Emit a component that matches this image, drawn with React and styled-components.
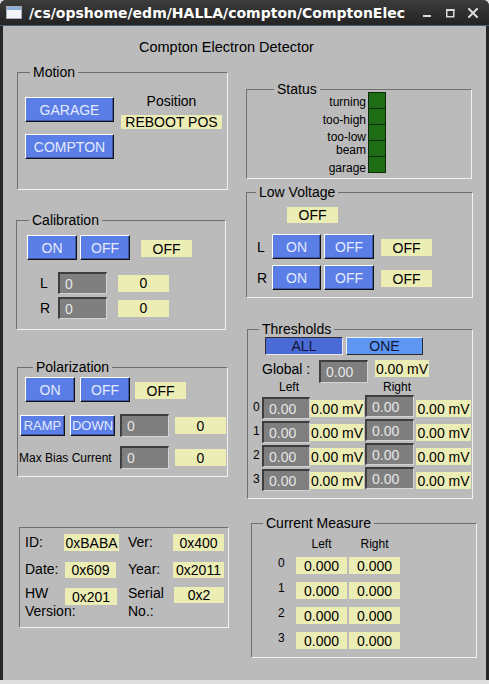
import React from 'react';
import styled, { createGlobalStyle } from 'styled-components';

const FONT = `"Liberation Sans", Arial, Helvetica, sans-serif`;

const GlobalStyle = createGlobalStyle`
  html, body { margin: 0; padding: 0; background: #dedede; }
  body { font-family: ${FONT}; color: #000; }
  * { box-sizing: border-box; }
`;

const Window = styled.div`
  width: 489px;
  height: 680px;
  display: flex;
  flex-direction: column;
  background: #262626;
  border-radius: 6px 6px 0 0;
  overflow: hidden;
`;

const TitleBar = styled.div`
  flex: 0 0 26px;
  height: 26px;
  display: flex;
  align-items: center;
  padding: 0 11px 0 6px;
  background: linear-gradient(#3c3c3c, #232323);
  border-bottom: 1px solid #4a5b70;
  & > svg {
    flex: none;
  }
`;

const TitleText = styled.div`
  flex: 0 1 auto;
  min-width: 0;
  overflow: hidden;
  margin-left: 7px;
  color: #fff;
  font: bold 14px "DejaVu Sans", sans-serif;
  white-space: nowrap;
`;

const Controls = styled.div`
  flex: none;
  margin-left: auto;
  padding-left: 6px;
  display: flex;
  gap: 13px;
  align-items: center;
`;

const Content = styled.div`
  flex: 1;
  margin: 0 3px;
  background: #bbbbbb;
  display: flex;
  flex-direction: column;
`;

const Heading = styled.div`
  margin: 13px 0 0 136px;
  font-size: 14.5px;
  line-height: 16px;
`;

const Columns = styled.div`
  display: grid;
  grid-template-columns: 237px 1fr;
  align-items: start;
`;

const Col = styled.div`
  display: flex;
  flex-direction: column;
  align-items: flex-start;
`;

const Box = styled.div`
  position: relative;
  flex: none;
  width: ${(p) => p.$w}px;
  height: ${(p) => p.$h}px;
  margin: ${(p) => p.$mt || 0}px 0 0 ${(p) => p.$ml || 0}px;
  padding: ${(p) => p.$pt || 0}px 0 0 ${(p) => p.$pl || 0}px;
  border: 1px solid;
  border-color: #707070 #f2f2f2 #f2f2f2 #707070;
`;

const Legend = styled.span`
  position: absolute;
  top: -9px;
  left: ${(p) => p.$x}px;
  padding: 0 3px;
  background: #bbbbbb;
  font-size: 14px;
  line-height: 16px;
  white-space: nowrap;
`;

const Row = styled.div`
  display: flex;
  align-items: ${(p) => p.$align || 'center'};
  gap: ${(p) => p.$gap || 0}px;
  margin: ${(p) => p.$mt || 0}px 0 0 ${(p) => p.$ml || 0}px;
  ${(p) => (p.$h ? `height: ${p.$h}px;` : '')}
`;

const Stack = styled.div`
  display: flex;
  flex-direction: column;
  align-items: ${(p) => p.$align || 'flex-start'};
  gap: ${(p) => p.$gap || 0}px;
  margin-top: ${(p) => p.$mt || 0}px;
  ${(p) => (p.$w ? `width: ${p.$w}px;` : '')}
`;

const Label = styled.div`
  flex: none;
  ${(p) => (p.$w ? `width: ${p.$w}px;` : '')}
  padding-left: ${(p) => p.$pl || 0}px;
  margin: ${(p) => p.$mt || 0}px 0 0 ${(p) => p.$ml || 0}px;
  font-size: ${(p) => p.$fs || 14}px;
  line-height: ${(p) => p.$lh || 16}px;
  text-align: ${(p) => p.$align || 'left'};
  white-space: nowrap;
`;

const Btn = styled.button`
  flex: none;
  width: ${(p) => p.$w}px;
  height: ${(p) => p.$h}px;
  margin: 0 0 0 ${(p) => p.$ml || 0}px;
  padding: 0;
  display: flex;
  align-items: center;
  justify-content: center;
  overflow: hidden;
  background: #5a7ee6;
  border: 1px solid;
  border-color: #ffffff #111111 #111111 #ffffff;
  box-shadow: inset -1px -1px 0 #3e56a8;
  color: #e4eaff;
  font-family: ${FONT};
  font-size: ${(p) => p.$fs || 14}px;
  line-height: 1;
  white-space: nowrap;
`;

const Choice = styled.div`
  flex: none;
  width: ${(p) => p.$w}px;
  height: ${(p) => p.$h}px;
  margin-left: ${(p) => p.$ml || 0}px;
  display: flex;
  align-items: center;
  justify-content: center;
  font-size: 14px;
  color: #111530;
  background: ${(p) => (p.$active ? '#4a6bd6' : '#5d96f3')};
  border: 1px solid;
  border-color: ${(p) =>
    p.$active ? '#2c2c2c #e8e8e8 #e8e8e8 #2c2c2c' : '#f2f2f2 #2c2c2c #2c2c2c #f2f2f2'};
`;

const Readout = styled.div`
  flex: none;
  width: ${(p) => p.$w}px;
  height: ${(p) => p.$h}px;
  margin: ${(p) => p.$mt || 0}px 0 0 ${(p) => p.$ml || 0}px;
  display: flex;
  align-items: center;
  justify-content: center;
  background: #ececb5;
  font-size: 14px;
  line-height: 1;
  white-space: nowrap;
`;

const Field = styled.div`
  flex: none;
  width: ${(p) => p.$w}px;
  height: ${(p) => p.$h}px;
  margin: ${(p) => p.$mt || 0}px 0 0 ${(p) => p.$ml || 0}px;
  display: flex;
  align-items: center;
  padding-left: 5px;
  background: #7f7f7f;
  border-style: solid;
  border-width: 2px 1px 1px 2px;
  border-color: #3e3e3e #d4d4d4 #d4d4d4 #3e3e3e;
  color: #e6e6e6;
  font-size: 14px;
  line-height: 1;
  white-space: nowrap;
`;

const LedStack = styled.div`
  flex: none;
  width: 18px;
  border: 1px solid #0c2a08;
  display: flex;
  flex-direction: column;
`;

const Led = styled.div`
  height: 15px;
  background: #1e6c13;
  & + & {
    height: 16px;
    border-top: 1px solid #0c2a08;
  }
`;

const IdRow = styled.div`
  display: grid;
  grid-template-columns: 39px 55px 54px 51px;
  align-items: ${(p) => p.$align || 'center'};
  margin-top: ${(p) => p.$mt || 0}px;
`;

const IdLabel = styled.div`
  padding-left: ${(p) => p.$pl || 0}px;
  font-size: 14px;
  line-height: ${(p) => p.$lh || 17}px;
  white-space: nowrap;
`;

const WinIcon = () => (
  <svg width="16" height="13" viewBox="0 0 16 13">
    <rect x="0.5" y="0.5" width="15" height="12" fill="#f3f5f9" stroke="#a4acba" />
    <rect x="1" y="1" width="14" height="3" fill="#8db0da" />
  </svg>
);

const MinIcon = () => (
  <svg width="10" height="10" viewBox="0 0 10 10">
    <rect x="1" y="7" width="8" height="2" fill="#dcdcdc" />
  </svg>
);

const MaxIcon = () => (
  <svg width="10" height="10" viewBox="0 0 10 10">
    <rect x="1.75" y="1.75" width="7" height="7" fill="none" stroke="#dcdcdc" strokeWidth="1.5" />
    <rect x="1" y="1" width="8.5" height="2" fill="#dcdcdc" />
  </svg>
);

const CloseIcon = () => (
  <svg width="10" height="10" viewBox="0 0 10 10">
    <path d="M1 1 L9 9 M9 1 L1 9" stroke="#dcdcdc" strokeWidth="2" strokeLinecap="square" />
  </svg>
);

const statusLabels = [
  ['turning', 0],
  ['too-high', 5],
  ['too-low', 4],
  ['beam', 0],
  ['garage', 5],
];

export default function App() {
  return (
    <>
      <GlobalStyle />
      <Window>
        <TitleBar>
          <WinIcon />
          <TitleText>/cs/opshome/edm/HALLA/compton/ComptonElec</TitleText>
          <Controls>
            <MinIcon />
            <MaxIcon />
            <CloseIcon />
          </Controls>
        </TitleBar>
        <Content>
          <Heading>Compton Electron Detector</Heading>
          <Columns>
            <Col>
              <Box $w={211} $h={118} $mt={17} $ml={14} $pt={20} $pl={7}>
                <Legend $x={12}>Motion</Legend>
                <Row $gap={7} $align="flex-start">
                  <Stack $gap={12} $mt={4}>
                    <Btn $w={89} $h={25}>GARAGE</Btn>
                    <Btn $w={89} $h={25}>COMPTON</Btn>
                  </Stack>
                  <Stack $align="center">
                    <Label>Position</Label>
                    <Readout $w={101} $h={14} $mt={6}>REBOOT POS</Readout>
                  </Stack>
                </Row>
              </Box>

              <Box $w={210} $h={110} $mt={30} $ml={13} $pt={14} $pl={10}>
                <Legend $x={12}>Calibration</Legend>
                <Row>
                  <Btn $w={50} $h={25}>ON</Btn>
                  <Btn $w={50} $h={25} $ml={3}>OFF</Btn>
                  <Readout $w={51} $h={17} $ml={11} $mt={2}>OFF</Readout>
                </Row>
                <Row $mt={12}>
                  <Label $w={31} $pl={13}>L</Label>
                  <Field $w={49} $h={22}>0</Field>
                  <Readout $w={51} $h={17} $ml={11}>0</Readout>
                </Row>
                <Row $mt={3}>
                  <Label $w={31} $pl={13}>R</Label>
                  <Field $w={49} $h={22}>0</Field>
                  <Readout $w={51} $h={17} $ml={11}>0</Readout>
                </Row>
              </Box>

              <Box $w={211} $h={110} $mt={37} $ml={14} $pt={9} $pl={1}>
                <Legend $x={15}>Polarization</Legend>
                <Row $ml={6}>
                  <Btn $w={50} $h={25}>ON</Btn>
                  <Btn $w={50} $h={25} $ml={5}>OFF</Btn>
                  <Readout $w={51} $h={17} $ml={5} $mt={2}>OFF</Readout>
                </Row>
                <Row $mt={12} $ml={1}>
                  <Btn $w={45} $h={21} $fs={13}>RAMP</Btn>
                  <Btn $w={45} $h={21} $fs={13} $ml={5}>DOWN</Btn>
                  <Field $w={49} $h={23} $ml={5}>0</Field>
                  <Readout $w={51} $h={17} $ml={6}>0</Readout>
                </Row>
                <Row $mt={9}>
                  <Label $w={101} $fs={12}>Max Bias Current</Label>
                  <Field $w={49} $h={23}>0</Field>
                  <Readout $w={51} $h={17} $ml={6}>0</Readout>
                </Row>
              </Box>

              <Box $w={210} $h={101} $mt={50} $ml={16} $pt={6} $pl={5}>
                <IdRow>
                  <IdLabel>ID:</IdLabel>
                  <Readout $w={55} $h={17}>0xBABA</Readout>
                  <IdLabel $pl={9}>Ver:</IdLabel>
                  <Readout $w={51} $h={17}>0x400</Readout>
                </IdRow>
                <IdRow $mt={10}>
                  <IdLabel>Date:</IdLabel>
                  <Readout $w={51} $h={16} $ml={1}>0x609</Readout>
                  <IdLabel $pl={9}>Year:</IdLabel>
                  <Readout $w={51} $h={16}>0x2011</Readout>
                </IdRow>
                <IdRow $mt={6} $align="start">
                  <IdLabel $lh={18}>
                    HW
                    <br />
                    Version:
                  </IdLabel>
                  <Readout $w={52} $h={17} $ml={1} $mt={4}>0x201</Readout>
                  <IdLabel $pl={9} $lh={18}>
                    Serial
                    <br />
                    No.:
                  </IdLabel>
                  <Readout $w={50} $h={16} $ml={1} $mt={3}>0x2</Readout>
                </IdRow>
              </Box>
            </Col>

            <Col>
              <Box $w={226} $h={90} $mt={34} $ml={6} $pt={2} $pl={63}>
                <Legend $x={27}>Status</Legend>
                <Row $gap={2} $align="flex-start">
                  <Stack $w={56} $align="flex-end" $mt={4}>
                    {statusLabels.map(([t, m]) => (
                      <Label key={t} $fs={12} $lh={13} $mt={m}>
                        {t}
                      </Label>
                    ))}
                  </Stack>
                  <LedStack>
                    <Led />
                    <Led />
                    <Led />
                    <Led />
                    <Led />
                  </LedStack>
                </Row>
              </Box>

              <Box $w={227} $h={106} $mt={13} $ml={6} $pt={14}>
                <Legend $x={9}>Low Voltage</Legend>
                <Readout $w={51} $h={16} $ml={40}>OFF</Readout>
                <Row $mt={11}>
                  <Label $w={25} $pl={10}>L</Label>
                  <Btn $w={49} $h={25}>ON</Btn>
                  <Btn $w={50} $h={25} $ml={3}>OFF</Btn>
                  <Readout $w={51} $h={17} $ml={7} $mt={2}>OFF</Readout>
                </Row>
                <Row $mt={6}>
                  <Label $w={25} $pl={10}>R</Label>
                  <Btn $w={49} $h={25}>ON</Btn>
                  <Btn $w={50} $h={25} $ml={3}>OFF</Btn>
                  <Readout $w={51} $h={17} $ml={7} $mt={2}>OFF</Readout>
                </Row>
              </Box>

              <Box $w={226} $h={170} $mt={31} $ml={7} $pt={7}>
                <Legend $x={11}>Thresholds</Legend>
                <Row $ml={17}>
                  <Choice $active $w={78} $h={18}>ALL</Choice>
                  <Choice $w={77} $h={18} $ml={3}>ONE</Choice>
                </Row>
                <Row $mt={5} $ml={14} $align="flex-start">
                  <Label $w={57} $lh={18}>Global :</Label>
                  <Field $w={49} $h={23}>0.00</Field>
                  <Readout $w={54} $h={17} $ml={7}>0.00 mV</Readout>
                </Row>
                <Row $mt={-3} $ml={14}>
                  <Label $w={54} $fs={12} $lh={14} $align="center">Left</Label>
                  <Label $w={54} $fs={12} $lh={14} $align="center" $ml={54}>Right</Label>
                </Row>
                <Stack $mt={1}>
                  {[0, 1, 2, 3].map((i) => (
                    <Row key={i} $h={24} $align="flex-start">
                      <Label $w={14} $pl={5} $fs={12} $lh={24}>{i}</Label>
                      <Field $w={48} $h={22} $mt={2}>0.00</Field>
                      <Readout $w={54} $h={17} $mt={5}>0.00 mV</Readout>
                      <Field $w={49} $h={22} $ml={1}>0.00</Field>
                      <Readout $w={55} $h={17} $mt={5} $ml={2}>0.00 mV</Readout>
                    </Row>
                  ))}
                </Stack>
              </Box>

              <Box $w={226} $h={135} $mt={24} $ml={11} $pt={12}>
                <Legend $x={11}>Current Measure</Legend>
                <Row $ml={44}>
                  <Label $w={51} $fs={12} $align="center">Left</Label>
                  <Label $w={51} $fs={12} $align="center" $ml={2}>Right</Label>
                </Row>
                <Stack $mt={5} $gap={8}>
                  {[0, 1, 2, 3].map((i) => (
                    <Row key={i} $align="flex-start">
                      <Label $w={44} $pl={26} $fs={12} $lh={12}>{i}</Label>
                      <Readout $w={51} $h={17}>0.000</Readout>
                      <Readout $w={51} $h={17} $ml={2}>0.000</Readout>
                    </Row>
                  ))}
                </Stack>
              </Box>
            </Col>
          </Columns>
        </Content>
      </Window>
    </>
  );
}
